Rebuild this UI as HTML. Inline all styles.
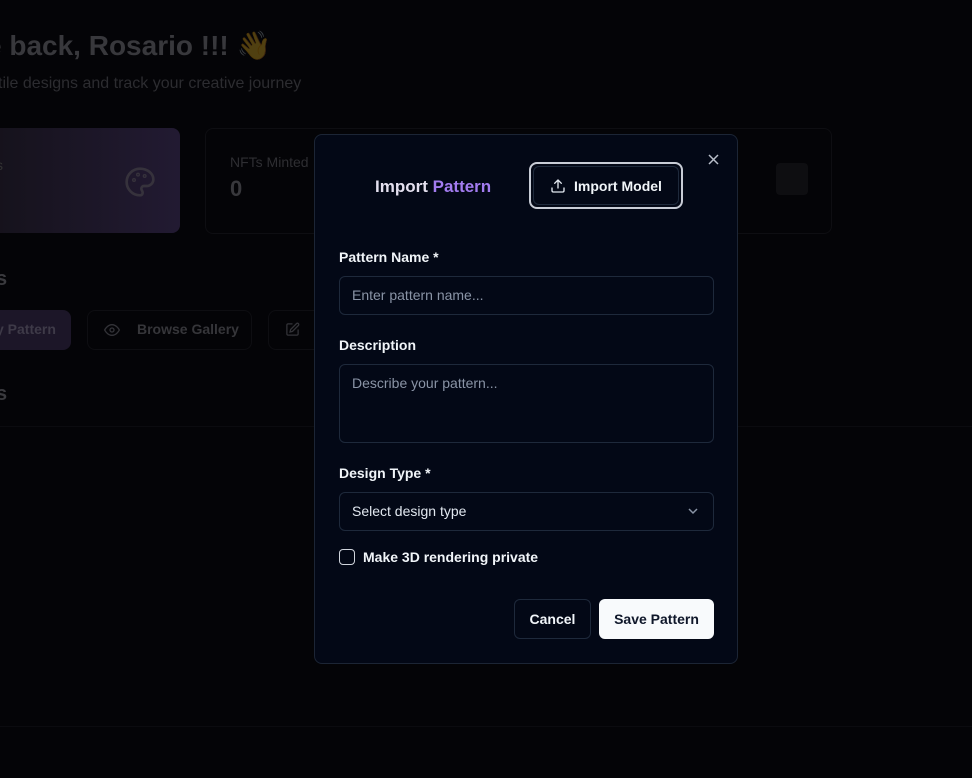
<!DOCTYPE html>
<html><head><meta charset="utf-8"><style>
*{box-sizing:border-box;margin:0;padding:0}
body{width:972px;height:778px;background:#040407;font-family:"Liberation Sans",sans-serif;position:relative;overflow:hidden;color:#fff}
.bg{position:absolute;color:#3a3a3e}
.card{position:absolute;border:1px solid #0e0e12;border-radius:8px}
.modal{position:absolute;left:314px;top:134px;width:424px;height:530px;background:#030816;border:1px solid #1c2535;border-radius:8px}
.lbl{position:absolute;left:24px;font-size:14px;font-weight:bold;color:#f1f5f9}
.inp{position:absolute;left:24px;width:375px;border:1px solid #1e293b;border-radius:6px;font-size:14px;color:#8a94a6;padding:0 12px}
</style></head><body>
<div class="bg" style="left:-14px;top:29px;font-size:28px;font-weight:bold;color:#38383c">e back, Rosario !!! <span style="opacity:.3">👋</span></div>
<div class="bg" style="left:-2px;top:75px;font-size:16px;color:#2c2c30">tile designs and track your creative journey</div>
<div class="card" style="left:-10px;top:128px;width:190px;height:105px;background:linear-gradient(90deg,#15121b,#221a32);border:none"></div>
<div class="bg" style="left:-4px;top:157px;font-size:14px;color:#333">s</div>
<svg style="position:absolute;left:124px;top:166px" width="32" height="32" viewBox="0 0 24 24" fill="none" stroke="#36323c" stroke-width="2"><path d="M12 2a10 10 0 0 0 0 20c1.5 0 2-1 2-2 0-1.5-1-1.5-1-3a2 2 0 0 1 2-2h2a5 5 0 0 0 5-5c0-4.4-4.5-8-10-8z"/><circle cx="7.5" cy="10.5" r=".5"/><circle cx="10.5" cy="6.5" r=".5"/><circle cx="15.5" cy="7.5" r=".5"/></svg>
<div class="card" style="left:205px;top:128px;width:627px;height:106px"></div>
<div class="bg" style="left:230px;top:154px;font-size:14px;color:#2e2e32">NFTs Minted</div>
<div class="bg" style="left:230px;top:176px;font-size:22px;font-weight:bold;color:#38383c">0</div>
<div style="position:absolute;left:776px;top:163px;width:32px;height:32px;background:#0e0e11;border-radius:4px"></div>
<div class="bg" style="left:-4px;top:268px;font-size:20px;font-weight:bold">s</div>
<div class="card" style="left:-10px;top:310px;width:81px;height:40px;background:#1c1628;border:none"></div>
<div class="bg" style="left:-4px;top:321px;font-size:14px;font-weight:bold;color:#3e3a48">y Pattern</div>
<div class="card" style="left:87px;top:310px;width:165px;height:40px"></div>
<svg style="position:absolute;left:104px;top:323px" width="16" height="14" viewBox="0 0 24 20" fill="none" stroke="#333338" stroke-width="2"><path d="M1 10s4-8 11-8 11 8 11 8-4 8-11 8S1 10 1 10z"/><circle cx="12" cy="10" r="3"/></svg>
<div class="bg" style="left:137px;top:321px;font-size:14px;font-weight:bold;color:#36363a">Browse Gallery</div>
<div class="card" style="left:268px;top:310px;width:60px;height:40px"></div>
<svg style="position:absolute;left:285px;top:322px" width="15" height="15" viewBox="0 0 24 24" fill="none" stroke="#333338" stroke-width="2"><path d="M12 3H5a2 2 0 0 0-2 2v14a2 2 0 0 0 2 2h14a2 2 0 0 0 2-2v-7"/><path d="M18.4 2.6a2.1 2.1 0 0 1 3 3L12 15l-4 1 1-4z"/></svg>
<div class="bg" style="left:-4px;top:383px;font-size:20px;font-weight:bold">s</div>
<div style="position:absolute;left:0;top:426px;width:972px;height:1px;background:#0b0b0f"></div>
<div style="position:absolute;left:0;top:726px;width:972px;height:1px;background:#0b0b0f"></div>

<div class="modal">
 <div style="position:absolute;left:60px;top:42px;font-size:17px;font-weight:bold;color:#e4e0ef">Import <span style="color:#a37cf0">Pattern</span></div>
 <div style="position:absolute;left:214px;top:27px;width:154px;height:47px;border:2px solid #c8ccd6;border-radius:8px;padding:2px"><div style="width:100%;height:100%;border:1px solid #1e293b;border-radius:6px;font-size:14px;font-weight:bold;color:#f1f5f9;display:flex;align-items:center;justify-content:center;gap:8px">
  <svg width="16" height="16" viewBox="0 0 24 24" fill="none" stroke="#e2e8f0" stroke-width="2" stroke-linecap="round" stroke-linejoin="round"><path d="M21 15v4a2 2 0 0 1-2 2H5a2 2 0 0 1-2-2v-4M17 8l-5-5-5 5M12 3v12"/></svg>Import Model</div></div>
 <svg style="position:absolute;left:393px;top:19px" width="11" height="11" viewBox="0 0 11 11" stroke="#b8bec9" stroke-width="1.5"><path d="M1 1l9 9M10 1l-9 9"/></svg>
 <div class="lbl" style="top:114px">Pattern Name *</div>
 <div class="inp" style="top:141px;height:39px;line-height:37px">Enter pattern name...</div>
 <div class="lbl" style="top:202px">Description</div>
 <div class="inp" style="top:229px;height:79px;padding-top:10px">Describe your pattern...</div>
 <div class="lbl" style="top:330px">Design Type *</div>
 <div class="inp" style="top:357px;height:39px;line-height:37px;color:#e2e8f0">Select design type
  <svg style="position:absolute;right:14px;top:14px" width="12" height="8" viewBox="0 0 12 8" fill="none" stroke="#8a94a6" stroke-width="1.5"><path d="M2 2l4 4 4-4"/></svg></div>
 <div style="position:absolute;left:24px;top:414px;width:16px;height:16px;border:1.5px solid #d0d4dc;border-radius:4px"></div>
 <div style="position:absolute;left:48px;top:414px;font-size:14px;font-weight:bold;color:#f1f5f9">Make 3D rendering private</div>
 <div style="position:absolute;left:199px;top:464px;width:77px;height:40px;border:1px solid #1e293b;border-radius:6px;font-size:14px;font-weight:bold;color:#f1f5f9;text-align:center;line-height:38px">Cancel</div>
 <div style="position:absolute;left:284px;top:464px;width:115px;height:40px;background:#f8fafc;border-radius:6px;font-size:14px;font-weight:bold;color:#0f172a;text-align:center;line-height:40px">Save Pattern</div>
</div>
</body></html>
